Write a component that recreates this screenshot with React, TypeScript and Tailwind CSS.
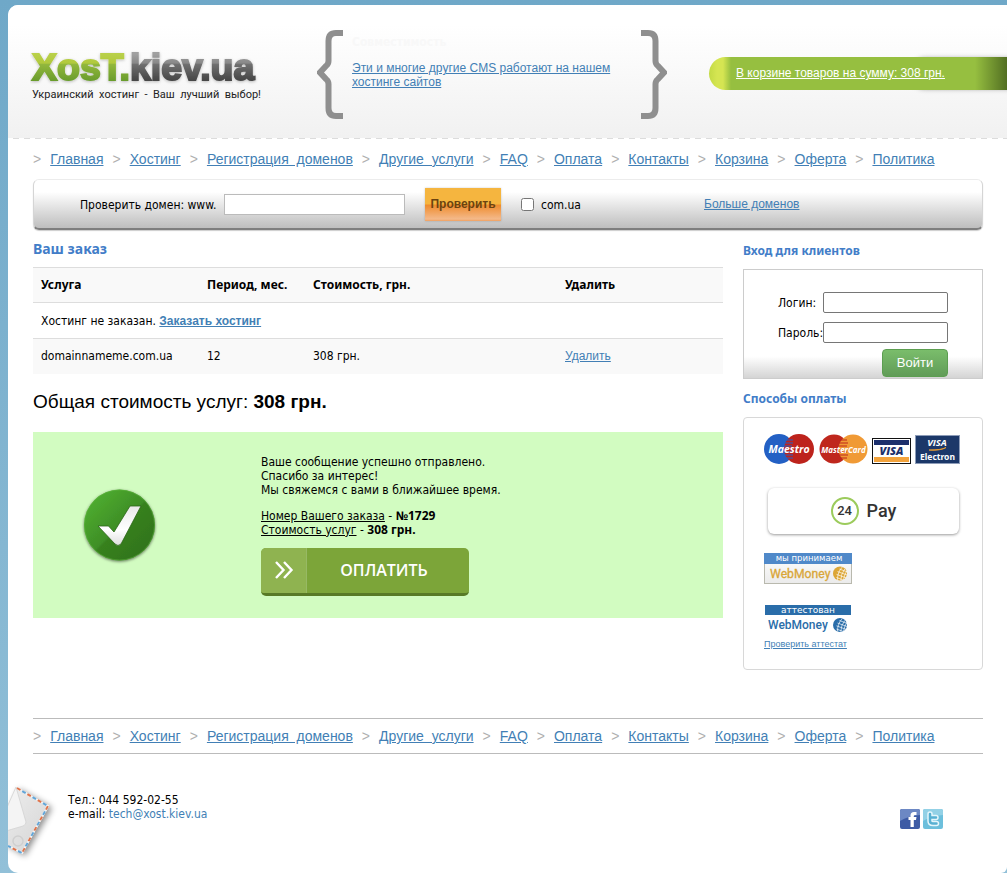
const navItems = [
  'Главная',
  'Хостинг',
  'Регистрация\u00a0 доменов',
  'Другие\u00a0 услуги',
  'FAQ',
  'Оплата',
  'Контакты',
  'Корзина',
  'Оферта',
  'Политика',
];

const linkClass = "font-['Liberation_Sans',sans-serif] text-[#427fb5] underline";

function Nav({ label }: { label: string }) {
  return (
    <nav aria-label={label} className="font-['Liberation_Sans',sans-serif] text-sm leading-5">
      <ul className="flex flex-wrap gap-x-[9px]">
        {navItems.map((item) => (
          <li key={item} className="flex gap-[9px] whitespace-nowrap">
            <span className="text-[#b0b0b0]">&gt;</span>
            <a href="#" className={linkClass}>
              {item}
            </a>
          </li>
        ))}
      </ul>
    </nav>
  );
}

function Logo() {
  return (
    <svg width="232" height="44" viewBox="0 0 232 44" role="img" aria-label="XosT.kiev.ua" className="-ml-0.5">
      <defs>
        <linearGradient id="logoGreen" gradientUnits="userSpaceOnUse" x1="0" y1="9" x2="0" y2="37">
          <stop offset="0" stopColor="#b9d04a" />
          <stop offset="0.33" stopColor="#b1c93c" />
          <stop offset="0.36" stopColor="#93b83c" />
          <stop offset="1" stopColor="#669a2b" />
        </linearGradient>
        <linearGradient id="logoGray" gradientUnits="userSpaceOnUse" x1="0" y1="9" x2="0" y2="37">
          <stop offset="0" stopColor="#a0a0a0" />
          <stop offset="0.33" stopColor="#888888" />
          <stop offset="0.36" stopColor="#707070" />
          <stop offset="1" stopColor="#424242" />
        </linearGradient>
        <filter id="logoGlow" x="-5%" y="-20%" width="110%" height="140%">
          <feDropShadow dx="0" dy="1" stdDeviation="1.5" floodColor="#000" floodOpacity="0.25" />
        </filter>
      </defs>
      <text
        x="2"
        y="35"
        fontFamily="Liberation Sans, sans-serif"
        fontWeight="700"
        fontSize="37.5"
        strokeWidth="2"
        filter="url(#logoGlow)"
      >
        <tspan fill="url(#logoGreen)" stroke="url(#logoGreen)">XosT.</tspan>
        <tspan fill="url(#logoGray)" stroke="url(#logoGray)">kiev.ua</tspan>
      </text>
    </svg>
  );
}

function Brace({ flip = false }: { flip?: boolean }) {
  return (
    <svg width="26" height="89" viewBox="0 0 26 89" aria-hidden="true" className={flip ? 'shrink-0 -scale-x-100' : 'shrink-0'}>
      <path
        d="M26 3H19Q11.500 3 11.500 11V31Q11.500 34 9 36L3 42.500L9 49Q11.500 51 11.500 54V78Q11.500 86 19 86H26"
        fill="none"
        stroke="#8f8f8f"
        strokeWidth="6"
      />
    </svg>
  );
}

function CheckBadge() {
  return (
    <svg width="84" height="84" viewBox="0 0 84 84" aria-hidden="true">
      <defs>
        <linearGradient id="badge" x1="0" y1="0" x2="1" y2="1">
          <stop offset="0.1" stopColor="#4fae30" />
          <stop offset="0.5" stopColor="#3e8e26" />
          <stop offset="0.52" stopColor="#37811f" />
          <stop offset="1" stopColor="#2f6f1a" />
        </linearGradient>
        <linearGradient id="tick" x1="0" y1="0" x2="0" y2="1">
          <stop offset="0" stopColor="#e9e9e9" />
          <stop offset="0.6" stopColor="#ffffff" />
          <stop offset="1" stopColor="#dedede" />
        </linearGradient>
        <filter id="badgeShadow" x="-20%" y="-20%" width="140%" height="140%">
          <feDropShadow dx="0" dy="1" stdDeviation="1.800" floodColor="#000" floodOpacity="0.55" />
        </filter>
      </defs>
      <circle cx="42.500" cy="42" r="35.500" fill="url(#badge)" filter="url(#badgeShadow)" />
      <circle cx="42.500" cy="42" r="35" fill="none" stroke="#5fb540" strokeOpacity="0.5" />
      <path d="M21 43H31.500L37 49L53 23H64L44 61Q41 64 38 61Z" fill="url(#tick)" stroke="#2b6618" strokeWidth="0.8" />
    </svg>
  );
}

function MaestroLogo() {
  return (
    <svg width="51" height="30" viewBox="0 0 51 30" role="img" aria-label="Maestro">
      <circle cx="15" cy="15" r="15" fill="#2360c4" />
      <circle cx="35" cy="15" r="15" fill="#bd231c" />
      <path d="M21 6h8M20 9h9M20 12h8M20 18h8M20 21h9M21 24h8" stroke="#2360c4" strokeWidth="1" />
      <text x="25" y="19" textAnchor="middle" fontFamily="Open Sans, sans-serif" fontStyle="italic" fontWeight="700" fontSize="10.500" fill="#fff">
        Maestro
      </text>
    </svg>
  );
}

function MasterCardLogo() {
  return (
    <svg width="49" height="30" viewBox="0 0 49 30" role="img" aria-label="MasterCard">
      <circle cx="15" cy="15" r="14.500" fill="#bf271d" />
      <circle cx="34" cy="15" r="14.500" fill="#f09a35" />
      <path d="M21 6h7M20 9h9M20 12h8M20 18h8M20 21h9M21 24h7" stroke="#bf271d" strokeWidth="1" />
      <text x="24.500" y="18.500" textAnchor="middle" fontFamily="Open Sans, sans-serif" fontStyle="italic" fontWeight="700" fontSize="8" fill="#fff">
        MasterCard
      </text>
    </svg>
  );
}

function VisaLogo() {
  return (
    <svg width="39" height="26" viewBox="0 0 39 26" role="img" aria-label="VISA">
      <rect x="0.500" y="0.500" width="38" height="25" fill="#fff" stroke="#111" />
      <rect x="2" y="2" width="35" height="5" fill="#1b2f6c" />
      <rect x="2" y="19" width="35" height="5" fill="#f3a33c" />
      <text x="19.500" y="17" textAnchor="middle" fontFamily="Open Sans, sans-serif" fontStyle="italic" fontWeight="800" fontSize="11" fill="#1b2f6c">
        VISA
      </text>
    </svg>
  );
}

function VisaElectronLogo() {
  return (
    <svg width="45" height="29" viewBox="0 0 45 29" role="img" aria-label="VISA Electron">
      <rect x="0.500" y="0.500" width="44" height="28" fill="#1c3869" stroke="#8d9cb8" />
      <text x="22" y="11" textAnchor="middle" fontFamily="Open Sans, sans-serif" fontStyle="italic" fontWeight="700" fontSize="9.500" fill="#fff">
        VISA
      </text>
      <path d="M14 15Q25 16 31 12.500Q27 15 14 15Z" fill="#f0a030" stroke="#f0a030" strokeWidth="0.8" />
      <text x="22.500" y="25" textAnchor="middle" fontFamily="Noto Sans, sans-serif" fontWeight="700" fontSize="8.500" fill="#fff">
        Electron
      </text>
    </svg>
  );
}

function Globe({ cx, cy, color }: { cx: number; cy: number; color: string }) {
  return (
    <g>
      <circle cx={cx} cy={cy} r="7" fill={color} />
      <g stroke="#fff" strokeWidth="0.6" fill="none" transform={`translate(${cx} ${cy}) rotate(20)`}>
        <path d="M0 -7Q-3 0 0 7M3 -6Q1 0 3 6M5.500 -5Q4.500 0 5.500 5M-2 -4H6M-3 -1H7M-3 2H7M-2 5H5" />
      </g>
    </g>
  );
}

function WebMoneyAccept() {
  return (
    <svg width="88" height="31" viewBox="0 0 88 31" role="img" aria-label="мы принимаем WebMoney">
      <defs>
        <linearGradient id="wmGray" x1="0" y1="0" x2="0" y2="1">
          <stop offset="0" stopColor="#ffffff" />
          <stop offset="1" stopColor="#ebebeb" />
        </linearGradient>
      </defs>
      <rect x="0.500" y="0.500" width="87" height="30" fill="url(#wmGray)" stroke="#b9b9ae" />
      <rect width="88" height="11" fill="#5089c9" />
      <text x="45" y="8" textAnchor="middle" fontFamily="DejaVu Sans, sans-serif" fontSize="8.500" fill="#fff">
        мы принимаем
      </text>
      <text x="6" y="25" fontFamily="Roboto, sans-serif" fontSize="12.200" fill="#d9a638" stroke="#d9a638" strokeWidth="0.3">
        WebMoney
      </text>
      <Globe cx={76} cy={20.5} color="#dca636" />
    </svg>
  );
}

function WebMoneyCertified() {
  return (
    <svg width="88" height="30" viewBox="0 0 88 30" role="img" aria-label="аттестован WebMoney">
      <rect x="1" y="1" width="86" height="10" fill="#2a6da9" />
      <text x="44" y="8.500" textAnchor="middle" fontFamily="DejaVu Sans, sans-serif" fontSize="9" fill="#fff">
        аттестован
      </text>
      <text x="4" y="25" fontFamily="Roboto, sans-serif" fontWeight="500" fontSize="12" fill="#2a6da9">
        WebMoney
      </text>
      <Globe cx={76} cy={21} color="#2a6da9" />
    </svg>
  );
}

function Envelope() {
  return (
    <svg width="56" height="84" viewBox="0 0 56 84" aria-hidden="true" className="shrink-0">
      <defs>
        <linearGradient id="paper" x1="0" y1="0" x2="1" y2="1">
          <stop offset="0" stopColor="#f0f0f0" />
          <stop offset="1" stopColor="#d4d4d4" />
        </linearGradient>
        <filter id="paperShadow" x="-30%" y="-20%" width="160%" height="140%">
          <feDropShadow dx="3" dy="2" stdDeviation="3" floodColor="#000" floodOpacity="0.45" />
        </filter>
      </defs>
      <path d="M-12 60L8 9L41 28L14 76Z" fill="url(#paper)" filter="url(#paperShadow)" />
      <path d="M-12 54L8 9L18 44Q18 47 15 48L-12 56Z" fill="#f4f4f4" stroke="#d2d2d2" strokeWidth="0.8" />
      <circle cx="10" cy="63" r="5" fill="none" stroke="#cfcfcf" strokeWidth="1.500" />
      <path d="M9 10L40 28L14 75L0 68" fill="none" stroke="#f2f2f2" strokeWidth="2" />
      <path d="M9 10L40 28L14 75L0 68" fill="none" stroke="#e0734a" strokeWidth="2" strokeDasharray="4 8" />
      <path d="M9 10L40 28L14 75L0 68" fill="none" stroke="#62a5d8" strokeWidth="2" strokeDasharray="4 8" strokeDashoffset="6" />
    </svg>
  );
}

function SocialLinks() {
  return (
    <div className="flex gap-[3px]">
      <a href="#" aria-label="Facebook">
        <svg width="20" height="20" viewBox="0 0 20 20">
          <rect width="20" height="20" rx="2" fill="#3d5ba5" />
          <path d="M0 2Q0 0 2 0H18Q20 0 20 2V6Q8 7 0 12Z" fill="#6c88c4" />
          <path d="M10.500 18V11H8.500V8H10.500V6.500Q10.500 3 14 3H16.500V6H15Q13.800 6 13.800 7V8H16.500L16 11H13.800V18Z" fill="#fff" />
        </svg>
      </a>
      <a href="#" aria-label="Twitter">
        <svg width="20" height="20" viewBox="0 0 20 20">
          <rect width="20" height="20" rx="2" fill="#6cbfdc" />
          <path d="M0 2Q0 0 2 0H18Q20 0 20 2V6Q8 7 0 12Z" fill="#93d1e6" />
          <path d="M7 5V12Q7 14.500 10 14.500H13.500M7 8.500H13" fill="none" stroke="#e4f6fb" strokeWidth="5.500" strokeLinecap="round" />
          <path d="M7 5V12Q7 14.500 10 14.500H13.500M7 8.500H13" fill="none" stroke="#57b0d2" strokeWidth="2.500" strokeLinecap="round" />
        </svg>
      </a>
    </div>
  );
}

function Header() {
  return (
    <header>
      <div className="flex h-[133px] items-start bg-linear-to-b from-white from-15% to-[#f1f1f1]">
        <div className="w-[309px] shrink-0 pt-10 pl-6">
          <Logo />
          <p className="font-['Roboto',sans-serif] text-[11px] leading-3 whitespace-nowrap text-[#222]">
            Украинский&nbsp; хостинг&nbsp; -&nbsp; Ваш&nbsp; лучший&nbsp; выбор!
          </p>
        </div>
        <div className="flex w-[350px] shrink-0 pt-[25px]">
          <Brace />
          <div className="flex-1 px-[9px] pt-[5px]">
            <p className="mb-3 text-xs leading-[14px] font-bold text-[#f8f8f8]">Совместимость</p>
            <a href="#" className={`${linkClass} block text-xs leading-[14px]`}>
              Эти и многие другие CMS работают на нашем хостинге сайтов
            </a>
          </div>
          <Brace flip />
        </div>
        <div className="ml-[42px] flex-1 pt-[52px]">
          <a
            href="#"
            className="block h-[33px] rounded-l-full bg-[linear-gradient(90deg,#c3da45_0,#d5e552_8px,#d5e552_14px,#96bf40_22px,#96bf40_calc(100%-32px),#526f22_100%)] pl-[27px] font-['Liberation_Sans',sans-serif] text-xs leading-[33px] whitespace-nowrap text-white underline shadow-[200px_0_5px_-1px_rgba(0,0,0,0.35)]"
          >
            В корзине товаров на сумму: 308 грн.
          </a>
        </div>
      </div>
      <div className="h-px bg-[repeating-linear-gradient(90deg,#fff_0,#fff_5px,#dcdcdc_5px,#dcdcdc_11px)]" />
    </header>
  );
}

function DomainSearch() {
  return (
    <form className="flex h-[51px] items-center rounded-md border-x border-t border-b-2 border-x-[#d5d5d5] border-t-[#ececec] border-b-[#7e7e7e] bg-linear-to-b from-white from-25% to-[#bebebe] pl-[46px] shadow-[0_1px_1px_rgba(0,0,0,0.2)]">
      <label htmlFor="domain" className="w-36 shrink-0 pt-0.5 whitespace-nowrap">
        Проверить домен: www.
      </label>
      <input id="domain" type="text" className="h-[21px] w-[181px] border border-[#bbb] bg-white px-1" />
      <button
        type="button"
        className="ml-5 h-[33px] w-[76px] bg-[linear-gradient(180deg,#f5b53f_0,#f5b53f_48%,#ee8c2e_52%,#f4b98a_94%,#f0a060_100%)] font-['Liberation_Sans',sans-serif] text-xs font-bold text-[#6b4310] shadow-[0_0_2px_rgba(0,0,0,0.2)]"
      >
        Проверить
      </button>
      <input id="comua" type="checkbox" className="ml-5 size-[13px]" />
      <label htmlFor="comua" className="ml-[7px] w-[163px] pt-0.5">
        com.ua
      </label>
      <a href="#" className={linkClass}>
        Больше доменов
      </a>
    </form>
  );
}

function OrderTable() {
  return (
    <table className="w-full table-fixed border-collapse text-left">
      <thead className="font-['Noto_Sans',sans-serif]">
        <tr className="h-[35px] border-y border-[#ddd] bg-[#f9f9f9]">
          <th className="w-[166px] px-2">Услуга</th>
          <th className="w-[106px] px-2">Период, мес.</th>
          <th className="w-[252px] px-2">Стоимость, грн.</th>
          <th className="px-2">Удалить</th>
        </tr>
      </thead>
      <tbody>
        <tr className="h-9 border-b border-[#ddd]">
          <td colSpan={4} className="px-2">
            Хостинг не заказан.{' '}
            <a href="#" className={`${linkClass} font-bold`}>
              Заказать хостинг
            </a>
          </td>
        </tr>
        <tr className="h-[35px] bg-[#f9f9f9]">
          <td className="px-2">domainnameme.com.ua</td>
          <td className="px-2">12</td>
          <td className="px-2">308 грн.</td>
          <td className="px-2">
            <a href="#" className={linkClass}>
              Удалить
            </a>
          </td>
        </tr>
      </tbody>
    </table>
  );
}

function SuccessMessage() {
  return (
    <div className="mt-4 flex bg-[#d2fcc1] pt-[23px] pb-[22px] leading-[14px]">
      <div className="flex w-[228px] shrink-0 items-center pl-11">
        <CheckBadge />
      </div>
      <div>
        <p>
          Ваше сообщение успешно отправлено.
          <br />
          Спасибо за интерес!
          <br />
          Мы свяжемся с вами в ближайшее время.
        </p>
        <p className="mt-3">
          <u>Номер Вашего заказа</u> - <b>№1729</b>
          <br />
          <u>Стоимость услуг</u> - <b>308 грн.</b>
        </p>
        <button
          type="button"
          className="mt-[11px] flex h-12 w-[208px] overflow-hidden rounded-[5px] border-b-[3px] border-[#587a27] bg-[#7ca539] text-white"
        >
          <span className="flex h-full w-[46px] items-center justify-center border-r border-[#97b964] bg-[#8fb350]">
            <svg width="20" height="20" viewBox="0 0 20 20" fill="none" stroke="#fff" strokeWidth="2.400" aria-hidden="true">
              <path d="M2 2L9.500 10L2 18M10 2L17.500 10L10 18" />
            </svg>
          </span>
          <span className="flex h-full flex-1 items-center justify-center pr-2 font-['Open_Sans',sans-serif] text-base font-semibold">
            ОПЛАТИТЬ
          </span>
        </button>
      </div>
    </div>
  );
}

function Sidebar() {
  return (
    <aside className="w-60 shrink-0">
      <h2 className="mt-3 font-['Noto_Sans',sans-serif] leading-[18px] font-bold text-[#427dc8]">Вход для клиентов</h2>
      <form className="mt-[9px] grid grid-cols-[45px_125px] items-center border border-[#ccc] bg-linear-to-b from-white from-80% to-[#d4d4d4] pt-[22px] pb-px pl-[34px]">
        <label htmlFor="login">Логин:</label>
        <input id="login" type="text" className="h-[21px] rounded-xs border border-[#767676] bg-white px-1" />
        <label htmlFor="password" className="mt-[9px] whitespace-nowrap">
          Пароль:
        </label>
        <input id="password" type="password" className="mt-[9px] h-[21px] rounded-xs border border-[#767676] bg-white px-1" />
        <button
          type="button"
          className="col-start-2 mt-1.5 h-7 w-[66px] justify-self-end rounded border border-[#5c9e51] bg-linear-to-b from-[#7abd6b] to-[#619c58] font-['Liberation_Sans',sans-serif] text-[13px] text-white"
        >
          Войти
        </button>
      </form>

      <h2 className="mt-[11px] font-['Noto_Sans',sans-serif] leading-[18px] font-bold text-[#427dc8]">Способы оплаты</h2>
      <div className="mt-[9px] rounded border border-[#d8d8d8] px-5 pt-4 pb-[19px]">
        <div className="flex items-end gap-1">
          <MaestroLogo />
          <MasterCardLogo />
          <VisaLogo />
          <VisaElectronLogo />
        </div>
        <button
          type="button"
          className="mt-6 ml-1 flex h-[46px] w-[191px] items-center justify-center gap-2 rounded-md bg-white shadow-[0_1px_3px_rgba(0,0,0,0.4)]"
        >
          <span className="flex size-7 items-center justify-center rounded-full border-2 border-[#9ccb5c] font-['Roboto',sans-serif] text-[13px] font-medium text-[#333]">
            24
          </span>
          <span className="font-['Roboto',sans-serif] text-lg font-medium text-[#333]">Pay</span>
        </button>
        <a href="#" className="mt-[19px] block w-[88px]">
          <WebMoneyAccept />
        </a>
        <a href="#" className="mt-5 block w-[88px]">
          <WebMoneyCertified />
        </a>
        <a href="#" className={`${linkClass} mt-1 block text-[9px] leading-3`}>
          Проверить аттестат
        </a>
      </div>
    </aside>
  );
}

export default function App() {
  return (
    <div className="flex min-h-screen flex-col bg-linear-to-b from-[#6fa8c8] to-[#92c0d8] pt-[5px] pl-2 font-['DejaVu_Sans_Condensed','Noto_Sans',sans-serif] text-xs text-black [&_b]:font-['Noto_Sans',sans-serif] [&_svg]:block">
      <div className="flex-1 overflow-hidden rounded-l-[10px] rounded-br-md bg-white">
        <Header />
        <div className="pr-6 pl-[25px]">
          <div className="py-2.5">
            <Nav label="Главное меню" />
          </div>
          <DomainSearch />
          <div className="flex gap-5">
            <main className="min-w-0 flex-1">
              <h1 className="my-2 pt-px font-['Noto_Sans',sans-serif] text-sm leading-5 font-bold text-[#427dc8]">Ваш заказ</h1>
              <OrderTable />
              <div className="mt-3.5 font-['Liberation_Sans',sans-serif] text-[19px] leading-7">
                Общая стоимость услуг: <strong>308 грн.</strong>
              </div>
              <SuccessMessage />
            </main>
            <Sidebar />
          </div>
          <div className="mt-12 border-y border-[#bbb] py-[7px]">
            <Nav label="Нижнее меню" />
          </div>
        </div>
        <footer className="flex items-start pt-6 pr-16">
          <Envelope />
          <p className="flex-1 pt-[15px] pl-1 leading-[14px]">
            Тел.: 044 592-02-55
            <br />
            e-mail:{' '}
            <a href="#" className="text-[#427fb5]">
              tech@xost.kiev.ua
            </a>
          </p>
          <div className="pt-[31px]">
            <SocialLinks />
          </div>
        </footer>
      </div>
    </div>
  );
}
